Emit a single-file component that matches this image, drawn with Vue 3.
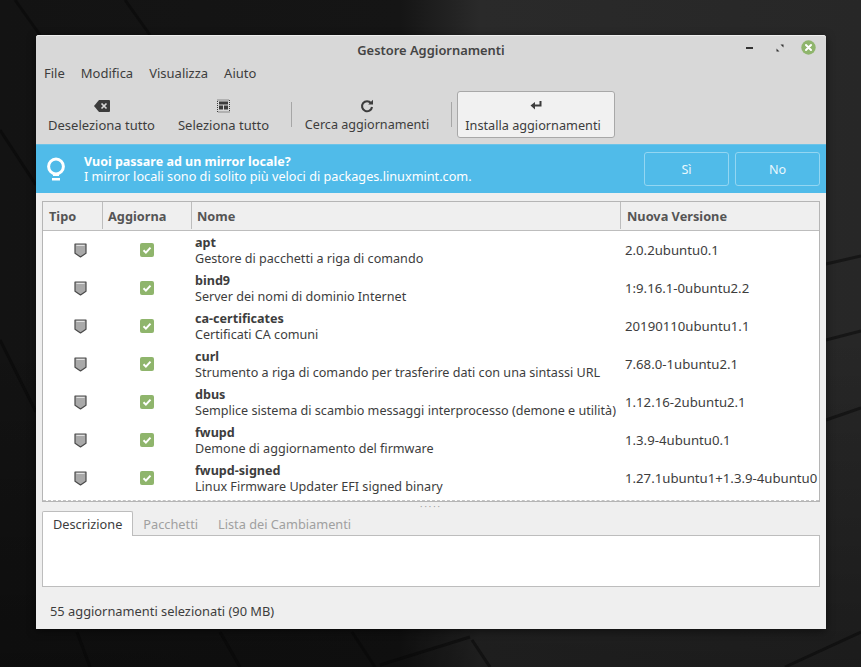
<script setup>
const menus = ['File', 'Modifica', 'Visualizza', 'Aiuto']

const packages = [
  { name: 'apt', desc: 'Gestore di pacchetti a riga di comando', version: '2.0.2ubuntu0.1' },
  { name: 'bind9', desc: 'Server dei nomi di dominio Internet', version: '1:9.16.1-0ubuntu2.2' },
  { name: 'ca-certificates', desc: 'Certificati CA comuni', version: '20190110ubuntu1.1' },
  { name: 'curl', desc: 'Strumento a riga di comando per trasferire dati con una sintassi URL', version: '7.68.0-1ubuntu2.1' },
  { name: 'dbus', desc: 'Semplice sistema di scambio messaggi interprocesso (demone e utilità)', version: '1.12.16-2ubuntu2.1' },
  { name: 'fwupd', desc: 'Demone di aggiornamento del firmware', version: '1.3.9-4ubuntu0.1' },
  { name: 'fwupd-signed', desc: 'Linux Firmware Updater EFI signed binary', version: '1.27.1ubuntu1+1.3.9-4ubuntu0' },
]

// cracks of the wallpaper, they only show around the window
const cracks = [
  'M15 0L40 35', 'M125 0L150 35', 'M0 130L36 185', 'M0 340L36 412',
  'M826 264L861 256', 'M826 340L861 331', 'M826 420L861 408',
  'M77 632L90 667', 'M220 632L240 667', 'M352 632L375 667',
  'M380 665L470 637', 'M472 640L490 667', 'M785 667L861 632',
]
</script>

<template>
  <div class="desktop">
    <svg class="wallpaper" width="861" height="667" viewBox="0 0 861 667">
      <path v-for="d in cracks" :key="d" :d="d" fill="none" stroke="#060606" stroke-width="3" opacity="0.5" />
    </svg>

    <div class="window">
      <header class="titlebar">
        <span class="title">Gestore Aggiornamenti</span>
        <div class="win-controls">
          <span class="win-min"></span>
          <svg class="win-max" width="8" height="8" viewBox="0 0 8 8">
            <path d="M4.5 0.5h3v3zM3.5 7.5h-3v-3z" fill="#333" />
          </svg>
          <svg class="win-close" width="15" height="15" viewBox="0 0 15 15">
            <circle cx="7.5" cy="7.5" r="7.2" fill="#8fb56c" />
            <path d="M5 5l5 5M10 5l-5 5" stroke="#fff" stroke-width="2" stroke-linecap="round" />
          </svg>
        </div>
      </header>

      <nav class="menubar">
        <span v-for="menu in menus" :key="menu">{{ menu }}</span>
      </nav>

      <div class="toolbar">
        <button class="tool tool-deselect">
          <svg width="16" height="12" viewBox="0 0 16 12">
            <path d="M5 0h10a1 1 0 0 1 1 1v10a1 1 0 0 1-1 1H5L0 6z" fill="#3c3c3c" />
            <path d="M7.5 3.5l5 5M12.5 3.5l-5 5" stroke="#d8d8d8" stroke-width="1.7" />
          </svg>
          <span>Deseleziona tutto</span>
        </button>
        <button class="tool tool-select">
          <svg width="13" height="14" viewBox="0 0 13 13">
            <rect x="0.5" y="0.5" width="12" height="12" fill="none" stroke="#3c3c3c" stroke-dasharray="1 1" />
            <rect x="2" y="2" width="9" height="3" fill="#3c3c3c" />
            <rect x="2" y="6" width="4" height="4" fill="#3c3c3c" />
            <rect x="7" y="6" width="4" height="4" fill="#3c3c3c" />
          </svg>
          <span>Seleziona tutto</span>
        </button>
        <span class="tool-sep"></span>
        <button class="tool tool-refresh">
          <svg width="14" height="14" viewBox="0 0 14 14">
            <path d="M11 4.2A5 5 0 1 0 12 8" fill="none" stroke="#3c3c3c" stroke-width="2.1" />
            <path d="M8.2 5.6H13V0.8z" fill="#3c3c3c" />
          </svg>
          <span>Cerca aggiornamenti</span>
        </button>
        <span class="tool-sep"></span>
        <button class="tool tool-install">
          <svg width="12" height="14" viewBox="0 0 12 11">
            <path d="M10.5 0.5v4.5H3" fill="none" stroke="#3c3c3c" stroke-width="2" />
            <path d="M5 1.5L0.5 5 5 9z" fill="#3c3c3c" />
          </svg>
          <span class="install-label">Installa aggiornamenti</span>
        </button>
      </div>

      <div class="infobar">
        <svg class="bulb" width="20" height="25" viewBox="0 0 20 25">
          <circle cx="10" cy="9.5" r="7.4" fill="none" stroke="#fff" stroke-width="3" />
          <path d="M7 16h6v3H7z" fill="#fff" />
          <rect x="6" y="21" width="8" height="2.5" fill="#fff" />
        </svg>
        <div class="info-text">
          <strong>Vuoi passare ad un mirror locale?</strong>
          <span>I mirror locali sono di solito più veloci di packages.linuxmint.com.</span>
        </div>
        <button class="info-btn">Sì</button>
        <button class="info-btn">No</button>
      </div>

      <main class="content">
        <section class="list">
          <div class="list-row list-head">
            <div>Tipo</div>
            <div>Aggiorna</div>
            <div>Nome</div>
            <div>Nuova Versione</div>
          </div>
          <div class="list-body">
            <div v-for="pkg in packages" :key="pkg.name" class="list-row pkg">
              <div class="cell-icon cell-type">
                <svg width="13" height="15" viewBox="0 0 13 15">
                  <path d="M1 1h11v9.2L6.5 14 1 10.2z" fill="#a9a9a9" stroke="#4a4a4a" stroke-width="1.2" stroke-linejoin="round" />
                  <path d="M2.4 2.4h8.2" stroke="#e8e8e8" />
                </svg>
              </div>
              <div class="cell-icon">
                <svg width="14" height="14" viewBox="0 0 14 14">
                  <rect width="14" height="14" rx="2" fill="#8fb56c" />
                  <path d="M3.5 7.3l2.4 2.3 4.6-5" fill="none" stroke="#fff" stroke-width="2" />
                </svg>
              </div>
              <div class="cell-name">
                <strong>{{ pkg.name }}</strong>
                <span>{{ pkg.desc }}</span>
              </div>
              <div class="cell-version">{{ pkg.version }}</div>
            </div>
          </div>
        </section>

        <div class="grip">·····</div>

        <div class="tabs">
          <span class="tab active">Descrizione</span>
          <span class="tab">Pacchetti</span>
          <span class="tab">Lista dei Cambiamenti</span>
        </div>
        <div class="tab-pane"></div>
      </main>

      <footer class="statusbar">55 aggiornamenti selezionati (90 MB)</footer>
    </div>
  </div>
</template>

<style scoped>
.desktop {
  position: relative;
  box-sizing: border-box;
  width: 861px;
  height: 667px;
  padding: 35px 35px 38px 36px;
  overflow: hidden;
  background:
    linear-gradient(180deg, transparent 0, transparent 50%, rgba(0, 0, 0, 0.3) 100%),
    linear-gradient(90deg, #131313 0, #151515 400px, #2a2a2a 480px, #272727 861px);
  font-family: "Noto Sans", "Open Sans", sans-serif;
  font-size: 12.6px;
  color: #3d3d3d;
}

.wallpaper {
  position: absolute;
  top: 0;
  left: 0;
}

.window {
  position: relative;
  display: flex;
  flex-direction: column;
  height: 594px;
  background: #efefef;
  border-radius: 3px 3px 0 0;
  box-shadow: 0 2px 8px rgba(0, 0, 0, 0.5);
}

.titlebar {
  position: relative;
  display: flex;
  align-items: center;
  justify-content: center;
  flex: 0 0 27px;
  padding-top: 1px;
  box-sizing: border-box;
  background: #d8d8d8;
  border-top: 1px solid #eee;
  border-radius: 3px 3px 0 0;
}

.title {
  font-weight: 600;
  font-size: 12.9px;
  color: #444;
}

.win-controls {
  position: absolute;
  top: 4px;
  right: 10px;
  display: flex;
  align-items: center;
  height: 15px;
}

.win-min {
  width: 7px;
  height: 2px;
  background: #333;
}

.win-max {
  margin: 0 17px 0 23px;
}

.menubar {
  display: flex;
  flex: 0 0 23px;
  align-items: center;
  gap: 16px;
  padding-left: 8px;
  padding-bottom: 2px;
  box-sizing: border-box;
  background: #d8d8d8;
  font-size: 13px;
}

.toolbar {
  display: flex;
  align-items: center;
  flex: 0 0 59px;
  box-sizing: border-box;
  padding-left: 4px;
  background: #d8d8d8;
  font-size: 13px;
}

.tool {
  display: flex;
  flex-direction: column;
  align-items: center;
  justify-content: space-between;
  box-sizing: border-box;
  height: 47px;
  padding: 7px 0 4px;
  border: 1px solid transparent;
  border-radius: 3px;
  background: none;
  font: inherit;
  line-height: 16px;
  white-space: nowrap;
  color: inherit;
}

.tool svg {
  height: 14px;
}

.tool-deselect {
  width: 123px;
}

.tool-select {
  width: 107px;
  margin-left: 7px;
}

.tool-refresh {
  width: 140px;
  margin-left: 5px;
  font-size: 12.6px;
}

.tool-install {
  width: 158px;
  margin-left: 5px;
  border-color: #a8a8a8;
  background: #f1f1f1;
  font-size: 12.7px;
}

.install-label {
  margin-right: 6px;
}

.tool-sep {
  width: 1px;
  height: 25px;
  margin-left: 14px;
  background: #a6a6a6;
}

.infobar {
  display: flex;
  align-items: center;
  flex: 0 0 49px;
  box-sizing: border-box;
  padding: 0 6px 0 10px;
  border-top: 1px solid #6cc3e8;
  background: #50bbe9;
  color: #fff;
}

.bulb {
  flex: none;
  margin-right: 18px;
}

.info-text {
  display: flex;
  flex: 1;
  flex-direction: column;
  font-size: 12.68px;
  line-height: 15px;
}

.info-text strong {
  font-size: 12.5px;
  font-weight: 700;
}

.info-btn {
  width: 85px;
  height: 34px;
  margin-left: 6px;
  border: 1px solid #93d6f2;
  border-radius: 3px;
  background: none;
  font: inherit;
  color: #e8f7fd;
}

.content {
  display: flex;
  flex: 1;
  flex-direction: column;
  padding: 8px 6px 0;
}

.list {
  height: 301px;
  box-sizing: border-box;
  border: 1px solid #b5b5b5;
  background: #fff;
  overflow: hidden;
}

.list-row {
  display: grid;
  grid-template-columns: 59px 89px 429px 199px;
}

.list-head {
  height: 29px;
  padding-bottom: 1px;
  box-sizing: border-box;
  background: #efefef;
  border-bottom: 1px solid #bdbdbd;
  font-size: 12.75px;
  font-weight: 700;
  color: #555;
}

.list-head > div {
  display: flex;
  align-items: center;
  padding-left: 5px;
  border-left: 1px solid #bdbdbd;
}

.list-head > div:first-child {
  padding-left: 6px;
  border-left: none;
}

.list-head > div:last-child {
  padding-left: 6px;
}

.list-body {
  height: 270px;
  box-sizing: border-box;
  border-bottom: 1px dashed #c4c4c4;
}

.pkg {
  height: 38px;
  align-items: center;
}

.cell-icon {
  display: flex;
  justify-content: center;
}

.cell-type {
  justify-content: flex-start;
  padding-left: 31px;
}

.cell-name {
  display: flex;
  flex-direction: column;
  padding-left: 4px;
  line-height: 15px;
  white-space: nowrap;
}

.cell-name strong {
  font-weight: 700;
}

.cell-name span {
  margin-top: 1px;
}

.cell-version {
  padding-left: 5px;
  font-size: 13.2px;
  white-space: nowrap;
  overflow: hidden;
}

.grip {
  height: 9px;
  line-height: 9px;
  text-align: center;
  letter-spacing: 2px;
  font-size: 9px;
  color: #a0a0a0;
}

.tabs {
  display: flex;
  height: 25px;
  box-sizing: border-box;
  border-bottom: 1px solid #bdbdbd;
  font-size: 12.75px;
}

.tab {
  display: flex;
  align-items: center;
  height: 25px;
  box-sizing: border-box;
  padding: 0 10px;
  color: #a0a0a0;
}

.tab.active {
  border: 1px solid #bdbdbd;
  border-bottom: none;
  border-radius: 2px 2px 0 0;
  background: #fff;
  color: #3d3d3d;
}

.tab-pane {
  height: 51px;
  box-sizing: border-box;
  border: 1px solid #bdbdbd;
  border-top: none;
  background: #fff;
}

.statusbar {
  display: flex;
  flex: 0 0 42px;
  align-items: center;
  padding-left: 14px;
  padding-top: 6px;
  box-sizing: border-box;
  font-size: 12.85px;
}
</style>
